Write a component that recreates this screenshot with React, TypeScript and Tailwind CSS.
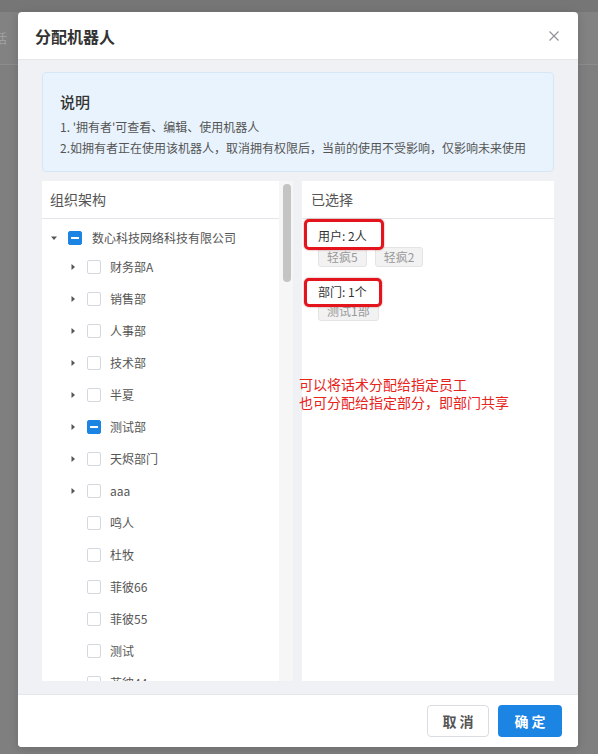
import React from "react";

const FONT = { fontFamily: '"Noto Sans CJK SC", "Noto Sans", sans-serif' };

function Caret({ dir }: { dir: "down" | "right" | "none" }) {
  if (dir === "none") return <span className="w-[10px] h-[10px] inline-block shrink-0" />;
  return (
    <svg width="10" height="10" viewBox="0 0 10 10" className="inline-block shrink-0">
      {dir === "down" ? (
        <polygon points="2,3.5 8,3.5 5,7" fill="#555" />
      ) : (
        <polygon points="3.5,2 7,5 3.5,8" fill="#555" />
      )}
    </svg>
  );
}

function Checkbox({ state }: { state: "empty" | "partial" }) {
  if (state === "partial")
    return (
      <span className="ml-[9px] w-[14px] h-[14px] shrink-0 rounded-[2px] bg-[#1c84e3] border border-[#1c84e3] flex items-center justify-center">
        <span className="w-[8px] h-[2px] bg-white" />
      </span>
    );
  return <span className="ml-[9px] w-[14px] h-[14px] shrink-0 rounded-[2px] bg-white border border-[#d5d8de]" />;
}

const children: { name: string; caret: boolean; state: "empty" | "partial" }[] = [
  { name: "财务部A", caret: true, state: "empty" },
  { name: "销售部", caret: true, state: "empty" },
  { name: "人事部", caret: true, state: "empty" },
  { name: "技术部", caret: true, state: "empty" },
  { name: "半夏", caret: true, state: "empty" },
  { name: "测试部", caret: true, state: "partial" },
  { name: "天烬部门", caret: true, state: "empty" },
  { name: "aaa", caret: true, state: "empty" },
  { name: "鸣人", caret: false, state: "empty" },
  { name: "杜牧", caret: false, state: "empty" },
  { name: "菲彼66", caret: false, state: "empty" },
  { name: "菲彼55", caret: false, state: "empty" },
  { name: "测试", caret: false, state: "empty" },
  { name: "菲彼44", caret: false, state: "empty" },
  { name: "菲彼33", caret: false, state: "empty" },
];

function Tag({ children }: { children: React.ReactNode }) {
  return (
    <span className="h-[20px] px-[8px] flex items-center bg-[#f2f2f2] border border-[#e4e4e4] rounded-[3px] text-[12px] text-[#999]">
      {children}
    </span>
  );
}

export default function App() {
  return (
    <div className="relative w-[598px] h-[754px] bg-[#7f7f7f] overflow-hidden" style={FONT}>
      {/* background page under overlay */}
      <div className="h-[12px] bg-[#767676]" />
      <div className="h-[53px] bg-[#828282] border-b border-[#8c8c8c] flex items-center">
        <span className="ml-[-6px] text-[13px] text-[#a0a0a0]">话</span>
      </div>

      {/* modal */}
      <div className="absolute left-[18px] top-[12px] w-[560px] h-[735px] bg-white rounded-[4px] shadow-[0_2px_10px_rgba(0,0,0,0.15)] flex flex-col overflow-hidden">
        {/* header */}
        <div className="h-[48px] border-b border-[#e6e6e6] flex items-center justify-between pl-[17px] pr-[19px] shrink-0">
          <span className="text-[16px] font-semibold text-[#333]">分配机器人</span>
          <svg width="10" height="10" viewBox="0 0 10 10">
            <path d="M0.5 0.5 L9.5 9.5 M9.5 0.5 L0.5 9.5" stroke="#909399" strokeWidth="1.2" />
          </svg>
        </div>

        {/* body */}
        <div className="flex-1 bg-[#eff1f4] px-[24px] pt-[12px] pb-[12px] flex flex-col gap-[9px] min-h-0">
          <div className="h-[100px] shrink-0 bg-[#e8f3fd] border border-[#d6e6f5] rounded-[4px] pl-[17px] pt-[19px]">
            <div className="text-[15px] font-medium text-[#333] leading-[20px]">说明</div>
            <div className="mt-[5px] text-[12px] text-[#555] leading-[20px]">1. '拥有者'可查看、编辑、使用机器人</div>
            <div className="mt-[1px] text-[12px] text-[#555] leading-[20px]">2.如拥有者正在使用该机器人，取消拥有权限后，当前的使用不受影响，仅影响未来使用</div>
          </div>

          <div className="flex h-[500px] shrink-0">
            {/* left panel */}
            <div className="w-[237px] bg-white overflow-hidden flex flex-col">
              <div className="h-[38px] shrink-0 border-b border-[#e4e6ea] flex items-center pl-[8px] text-[14px] text-[#555]">
                组织架构
              </div>
              <div className="pt-[6px]">
                <div className="h-[26px] flex items-center pl-[7px]">
                  <Caret dir="down" />
                  <Checkbox state="partial" />
                  <span className="ml-[10px] text-[12px] text-[#555]">数心科技网络科技有限公司</span>
                </div>
                {children.map((c) => (
                  <div key={c.name} className="h-[32px] flex items-center pl-[26px]">
                    <Caret dir={c.caret ? "right" : "none"} />
                    <Checkbox state={c.state} />
                    <span className="ml-[9px] text-[12px] text-[#555]">{c.name}</span>
                  </div>
                ))}
              </div>
            </div>

            {/* scrollbar */}
            <div className="w-[14px] bg-[#f6f6f7] pt-[3px] pl-[4px]">
              <div className="w-[8px] h-[98px] rounded-full bg-[#c4c4c4]" />
            </div>

            {/* right panel */}
            <div className="ml-[9px] w-[252px] bg-white relative">
              <div className="h-[38px] border-b border-[#e4e6ea] flex items-center pl-[9px] text-[14px] text-[#555]">
                已选择
              </div>
              <div className="px-[16px] pt-[9px]">
                <div className="relative z-10 text-[12px] text-[#333] leading-[16px]">用户: 2人</div>
                <div className="mt-[3px] flex gap-[8px]">
                  <Tag>轻疯5</Tag>
                  <Tag>轻疯2</Tag>
                </div>
                <div className="mt-[17px] relative z-10 text-[12px] text-[#333] leading-[16px]">部门: 1个</div>
                <div className="mt-[1px] flex gap-[8px]">
                  <Tag>测试1部</Tag>
                </div>
              </div>

              {/* annotations */}
              <div className="absolute z-[5] left-[2px] top-[38px] w-[80px] h-[31px] bg-white border-[3px] border-[#e3141c] rounded-[5px] shadow-[0_0_2px_rgba(150,0,0,0.5)]" />
              <div className="absolute z-[5] left-[2px] top-[97px] w-[78px] h-[29px] bg-white border-[3px] border-[#e3141c] rounded-[5px] shadow-[0_0_2px_rgba(150,0,0,0.5)]" />
              <div className="absolute z-10 left-[-3px] top-[194px] text-[14px] leading-[18px] text-[#e8231c]">
                <div>可以将话术分配给指定员工</div>
                <div>也可分配给指定部分，即部门共享</div>
              </div>
            </div>
          </div>
        </div>

        {/* footer */}
        <div className="h-[53px] shrink-0 border-t border-[#e4e6ea] bg-white flex items-center justify-end gap-[9px] pr-[16px]">
          <button className="w-[62px] h-[32px] rounded-[4px] border border-[#d9dce1] bg-white text-[14px] font-bold text-[#555]">
            取 消
          </button>
          <button className="w-[64px] h-[32px] rounded-[4px] bg-[#1c84e3] text-[14px] font-bold text-white">
            确 定
          </button>
        </div>
      </div>
    </div>
  );
}
